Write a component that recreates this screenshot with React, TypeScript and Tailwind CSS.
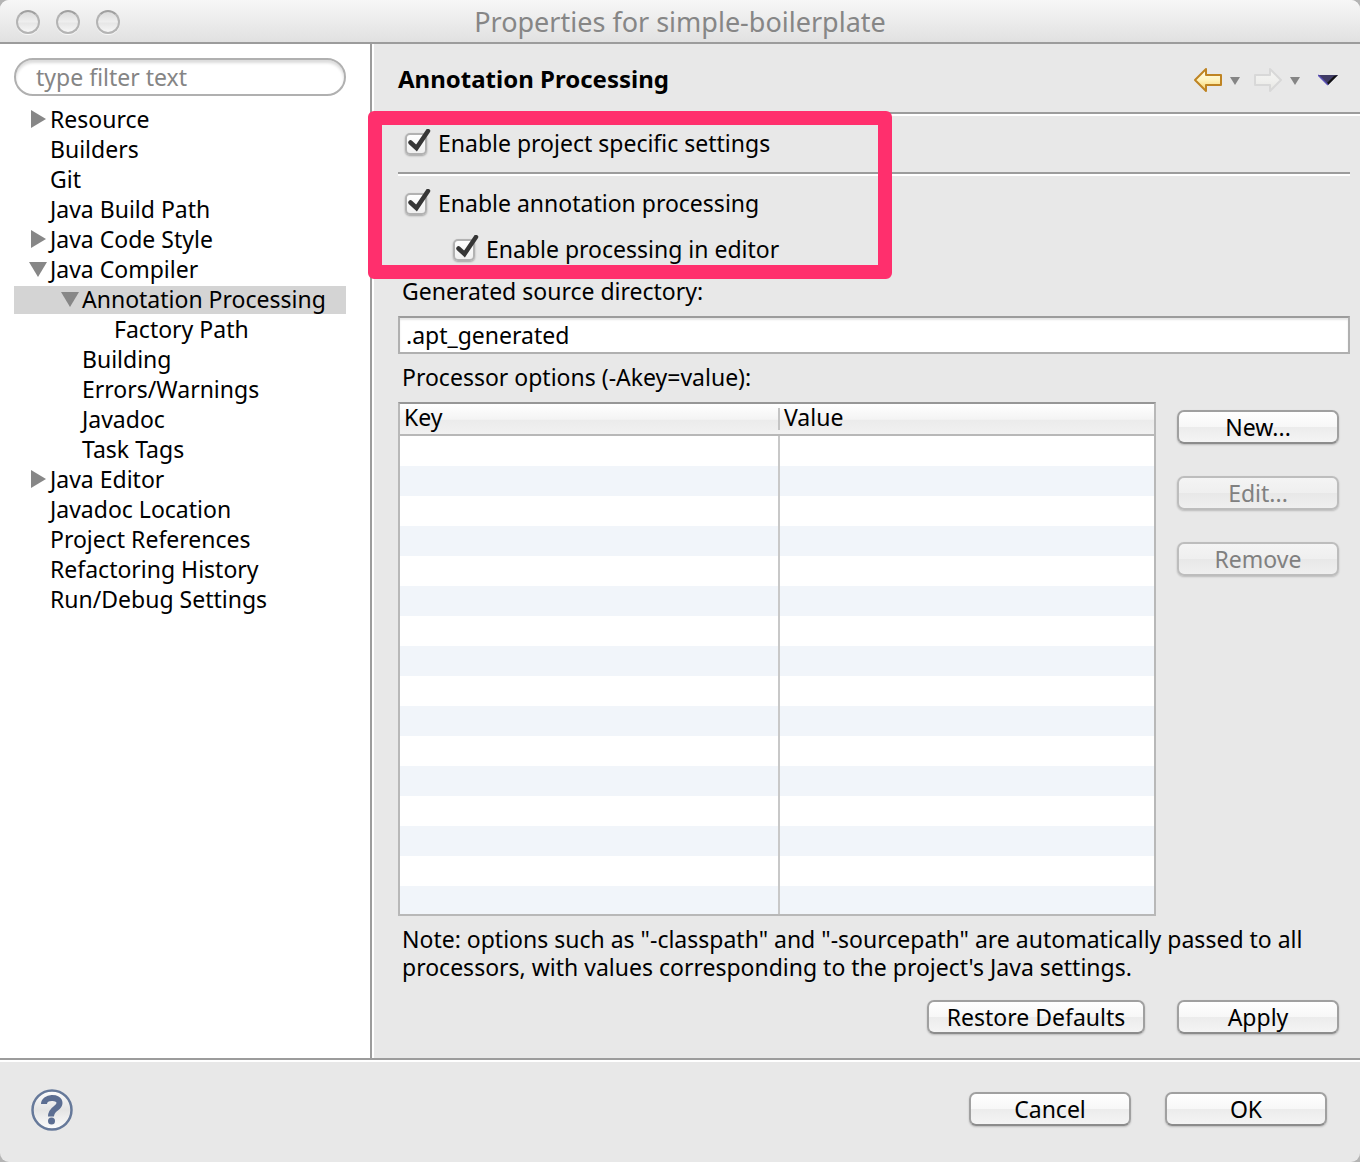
import React, { useState } from "react";

type TreeItem = { label: string; level: number; state?: "open" | "closed"; selected?: boolean };

const TREE: TreeItem[] = [
  { label: "Resource", level: 0, state: "closed" },
  { label: "Builders", level: 0 },
  { label: "Git", level: 0 },
  { label: "Java Build Path", level: 0 },
  { label: "Java Code Style", level: 0, state: "closed" },
  { label: "Java Compiler", level: 0, state: "open" },
  { label: "Annotation Processing", level: 1, state: "open", selected: true },
  { label: "Factory Path", level: 2 },
  { label: "Building", level: 1 },
  { label: "Errors/Warnings", level: 1 },
  { label: "Javadoc", level: 1 },
  { label: "Task Tags", level: 1 },
  { label: "Java Editor", level: 0, state: "closed" },
  { label: "Javadoc Location", level: 0 },
  { label: "Project References", level: 0 },
  { label: "Refactoring History", level: 0 },
  { label: "Run/Debug Settings", level: 0 },
];

const INDENT = ["pl-3.5", "pl-[46px]", "pl-[78px]"];

function Disclosure({ state }: { state?: "open" | "closed" }) {
  return (
    <svg viewBox="0 0 20 20" className="h-5 w-5 shrink-0 fill-[#878787]" aria-hidden="true">
      {state === "closed" && <path d="M3 1 L18 10 L3 19 Z" />}
      {state === "open" && <path d="M1 3 L19 3 L10 18 Z" />}
    </svg>
  );
}

function PushButton({ children, disabled, className = "" }: { children: React.ReactNode; disabled?: boolean; className?: string }) {
  const tone = disabled
    ? "border-[#bdbdbd] bg-[linear-gradient(#f4f4f4,#efefef_50%,#e8e8e8_50%,#efefef)] text-[#808080]"
    : "border-[#a0a0a0] border-b-[#8c8c8c] bg-[linear-gradient(#ffffff,#f7f7f7_50%,#ececec_50%,#f4f4f4)] text-black";
  return (
    <button
      type="button"
      disabled={disabled}
      className={`flex h-[34px] items-center justify-center whitespace-nowrap rounded-[7px] border-2 shadow-[0_1px_2px_rgba(0,0,0,0.2)] ${tone} ${className}`}
    >
      {children}
    </button>
  );
}

function Check({ id, label, className = "" }: { id: string; label: string; className?: string }) {
  const [on, setOn] = useState(true);
  return (
    <div className={`flex h-[30px] items-center gap-[11px] ${className}`}>
      <span className="relative h-[22px] w-[22px] shrink-0">
        <input
          id={id}
          type="checkbox"
          checked={on}
          onChange={() => setOn(!on)}
          className="block h-[22px] w-[22px] appearance-none rounded-[5px] border-2 border-[#b2b2b2] bg-[linear-gradient(#ffffff,#f0f0f0)] shadow-[0_1px_2px_rgba(0,0,0,0.3)]"
        />
        {on && (
          <svg viewBox="0 0 26 26" className="pointer-events-none absolute bottom-0 left-0 h-[26px] w-[26px]" aria-hidden="true">
            <path d="M5.5 13.5 L11.5 19 L23 2" fill="none" stroke="#363636" strokeWidth="4.5" strokeLinecap="round" strokeLinejoin="miter" />
          </svg>
        )}
      </span>
      <label htmlFor={id} className="pb-0.5">{label}</label>
    </div>
  );
}

function Arrow({ kind }: { kind: "back" | "forward" }) {
  const back = kind === "back";
  return (
    <svg viewBox="0 0 30 26" className={back ? "h-[26px] w-[30px]" : "h-[26px] w-[30px] -scale-x-100"} aria-hidden="true">
      <defs>
        <linearGradient id={kind} x1="0" y1="0" x2="0" y2="1">
          <stop offset="0" stopColor={back ? "#fffef2" : "#f4f4f2"} />
          <stop offset="0.5" stopColor={back ? "#fff3bd" : "#f0f0ee"} />
          <stop offset="1" stopColor={back ? "#f6cf62" : "#e6e6e2"} />
        </linearGradient>
      </defs>
      <path
        d="M2 13 L13 2 V8 H28 V18 H13 V24 Z"
        fill={`url(#${kind})`}
        stroke={back ? "#bf8423" : "#d8d8d8"}
        strokeWidth="2"
        strokeLinejoin="round"
      />
    </svg>
  );
}

function SmallDown() {
  return (
    <svg viewBox="0 0 10 8" className="h-2 w-2.5 fill-[#858585]" aria-hidden="true">
      <path d="M0 0 H10 L5 8 Z" />
    </svg>
  );
}

export default function App() {
  return (
    <div className="min-h-screen bg-[#b4b4b4] font-['Noto_Sans','Lucida_Grande',sans-serif] text-[23px] leading-[30px] text-black">
      <div className="flex min-h-screen flex-col overflow-hidden rounded-[9px] bg-[#e8e8e8]">
        <header className="grid h-11 grid-cols-[1fr_auto_1fr] items-center border-b-2 border-[#9c9c9c] bg-[linear-gradient(#f7f7f7,#e1e1e1)] px-4 pt-0.5">
          <div className="flex gap-4">
            {["Close", "Minimize", "Zoom"].map((n) => (
              <button
                key={n}
                type="button"
                aria-label={n}
                className="h-6 w-6 rounded-full border-2 border-[#b4b4b4] border-t-[#a0a0a0] bg-[linear-gradient(#dcdcdc,#efefef_50%,#e6e6e6_55%,#f6f6f6)] shadow-[0_1px_0_#f8f8f8]"
              />
            ))}
          </div>
          <h1 className="text-[27px] text-[#868686]">Properties for simple-boilerplate</h1>
        </header>

        <div className="flex flex-1 border-b-2 border-[#9c9c9c]">
          <aside className="w-[372px] shrink-0 border-r-2 border-[#9c9c9c] bg-white pt-3.5 pr-6 pb-8 pl-3.5">
            <input
              type="text"
              aria-label="Filter"
              placeholder="type filter text"
              className="block h-[38px] w-full rounded-full border-2 border-[#b0b0b0] bg-white px-5 shadow-[inset_0_3px_3px_rgba(0,0,0,0.14)] outline-none placeholder:text-[#858585]"
            />
            <ul className="mt-[9px]">
              {TREE.map((t) => (
                <li key={t.label} className="flex h-[30px] items-center">
                  <button
                    type="button"
                    className={`flex h-7 w-full items-center gap-0.5 pb-0.5 text-left whitespace-nowrap ${INDENT[t.level]} ${t.selected ? "bg-[#d4d4d4]" : ""}`}
                  >
                    <Disclosure state={t.state} />
                    {t.label}
                  </button>
                </li>
              ))}
            </ul>
          </aside>

          <main className="min-w-0 flex-1 border-l-2 border-white">
            <div className="flex h-[70px] items-center justify-between border-b-2 border-[#9c9c9c] pt-0.5 pr-5 pl-6">
              <h2 className="text-[24px] font-bold">Annotation Processing</h2>
              <div className="flex items-center pt-0.5">
                <button type="button" aria-label="Back"><Arrow kind="back" /></button>
                <button type="button" aria-label="Back history" className="ml-[7px] pt-0.5"><SmallDown /></button>
                <button type="button" aria-label="Forward" className="ml-[13px]"><Arrow kind="forward" /></button>
                <button type="button" aria-label="Forward history" className="ml-[7px] pt-0.5"><SmallDown /></button>
                <button type="button" aria-label="View menu" className="ml-[18px]">
                  <svg viewBox="0 0 22 12" className="h-3 w-[22px]" aria-hidden="true">
                    <path d="M0 1 H20 L10 11 Z" fill="#403c66" />
                    <path d="M20 1 L10 11 L9 9 L16 2 Z" fill="#111" />
                    <path d="M0 1 L10 11" stroke="#5b50b8" strokeWidth="1.5" />
                  </svg>
                </button>
              </div>
            </div>

            <div className="border-t-2 border-white pr-2.5 pb-6 pl-6">
              <section className="relative pt-[13px]">
                <Check id="project" label="Enable project specific settings" className="ml-[7px]" />
                <hr className="mt-[13px] h-1 border-t-2 border-b-2 border-t-[#9c9c9c] border-b-white" />
                <Check id="annotation" label="Enable annotation processing" className="mt-[13px] ml-[7px]" />
                <Check id="editor" label="Enable processing in editor" className="mt-4 ml-[55px]" />
                <div className="pointer-events-none absolute -top-[5px] -bottom-3.5 -left-[30px] w-[524px] rounded-md border-14 border-[#ff2f6d]" />
              </section>

              <label htmlFor="srcdir" className="mt-[11px] block pl-1">Generated source directory:</label>
              <input
                id="srcdir"
                type="text"
                defaultValue=".apt_generated"
                className="mt-2.5 block h-[38px] w-full border-2 border-[#b0b0b0] border-t-[#9c9c9c] bg-white px-1.5 shadow-[inset_0_2px_2px_rgba(0,0,0,0.1)] outline-none"
              />

              <h3 className="mt-2 pl-1">Processor options (-Akey=value):</h3>
              <div className="mt-2.5 flex items-start gap-[21px] pr-[11px]">
                <div className="min-w-0 flex-1 border-2 border-[#b8b8b8] border-t-[#969696]">
                  <table className="w-full table-fixed border-separate border-spacing-0 bg-white">
                    <thead>
                      <tr className="bg-[linear-gradient(#ffffff,#f4f4f4_48%,#ebebeb_50%,#f2f2f2)]">
                        <th className="h-8 w-[380px] border-b-2 border-[#b8b8b8] p-0 text-left font-normal">
                          <span className="flex h-[22px] items-center border-r-2 border-[#c4c4c4] pb-1 pl-1">Key</span>
                        </th>
                        <th className="h-8 border-b-2 border-[#b8b8b8] p-0 text-left font-normal">
                          <span className="flex h-[22px] items-center pb-1 pl-1">Value</span>
                        </th>
                      </tr>
                    </thead>
                    <tbody>
                      {Array.from({ length: 16 }, (_, i) => (
                        <tr key={i} className="h-[30px] last:h-7 even:bg-[#f1f5fa]">
                          <td className="border-r-2 border-[#c8c8c8] p-0" />
                          <td className="p-0" />
                        </tr>
                      ))}
                    </tbody>
                  </table>
                </div>
                <div className="flex w-[162px] flex-col gap-8 pt-2">
                  <PushButton>New...</PushButton>
                  <PushButton disabled>Edit...</PushButton>
                  <PushButton disabled>Remove</PushButton>
                </div>
              </div>

              <p className="mt-[9px] max-w-[920px] pl-1 leading-7">
                Note: options such as "-classpath" and "-sourcepath" are automatically passed to all processors, with values
                corresponding to the project's Java settings.
              </p>
              <div className="mt-[19px] flex justify-end gap-8 pr-[11px]">
                <PushButton className="w-[218px]">Restore Defaults</PushButton>
                <PushButton className="w-[162px]">Apply</PushButton>
              </div>
            </div>
          </main>
        </div>

        <footer className="flex h-[102px] items-center justify-between border-t-2 border-white pr-[33px] pb-1.5 pl-[31px]">
          <button type="button" aria-label="Help" className="pt-0.5">
            <svg viewBox="0 0 42 42" className="h-[42px] w-[42px]" aria-hidden="true">
              <defs>
                <linearGradient id="help" x1="0" y1="0" x2="0" y2="1">
                  <stop offset="0" stopColor="#fdfdfd" />
                  <stop offset="0.5" stopColor="#e4e4e4" />
                  <stop offset="1" stopColor="#fdfdfd" />
                </linearGradient>
              </defs>
              <circle cx="21" cy="21" r="19.5" fill="url(#help)" stroke="#66799a" strokeWidth="2.5" />
              <path d="M13 15 C13 7.5 28.5 7 28.5 14 C28.5 20 20 19 20 27.5" fill="none" stroke="#5c6e92" strokeWidth="6" />
              <circle cx="20.5" cy="32" r="3.5" fill="#5c6e92" />
            </svg>
          </button>
          <div className="flex gap-[34px]">
            <PushButton className="w-[162px]">Cancel</PushButton>
            <PushButton className="w-[162px]">OK</PushButton>
          </div>
        </footer>
      </div>
    </div>
  );
}
